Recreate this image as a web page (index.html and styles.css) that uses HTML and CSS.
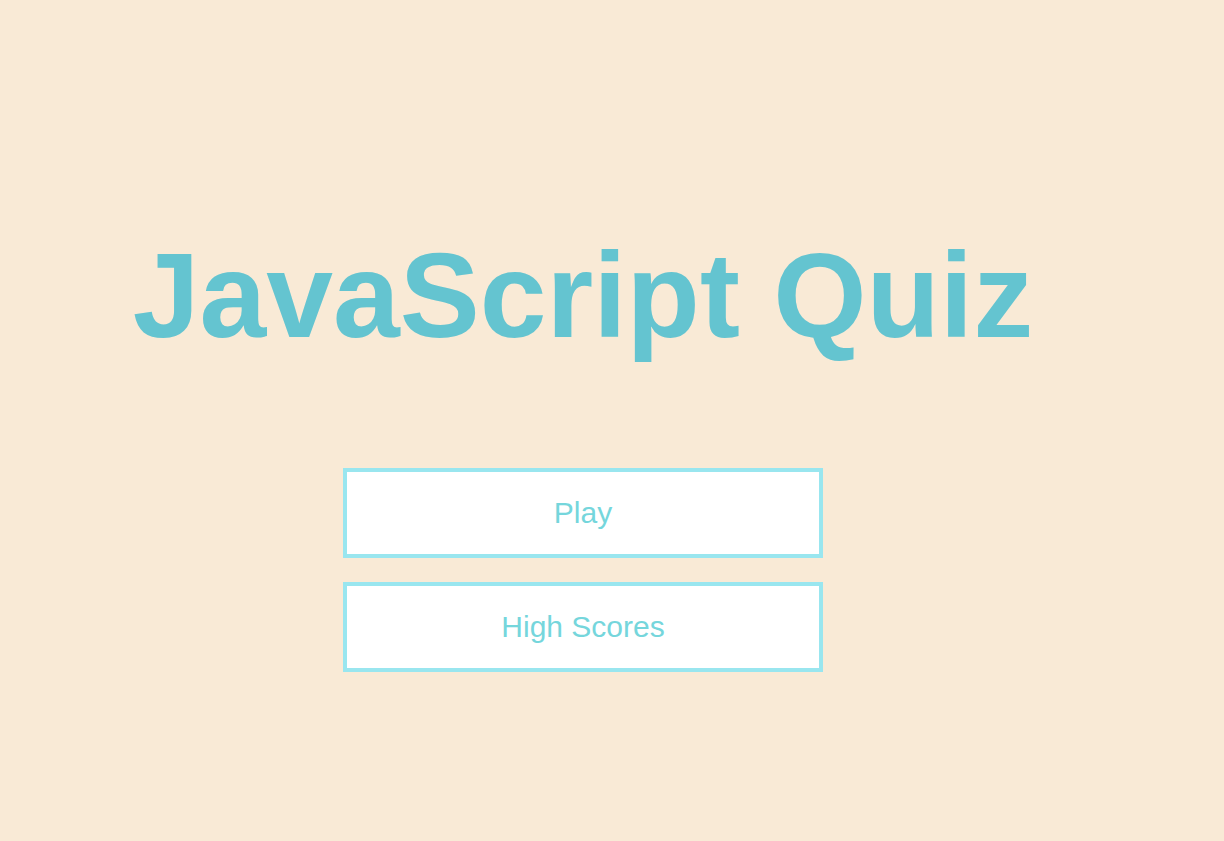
FILE: index.html
```html
<!DOCTYPE html>
<html lang="en">
<head>
<meta charset="utf-8">
<title>JavaScript Quiz</title>
<link rel="stylesheet" href="styles.css">
</head>
<body>
  <main class="home">
    <h1 class="title">JavaScript Quiz</h1>
    <div class="menu">
      <a class="btn" href="#">Play</a>
      <a class="btn" href="#">High Scores</a>
    </div>
  </main>
</body>
</html>
```
FILE: styles.css
```css
html, body {
  margin: 0;
  padding: 0;
  height: 100%;
}
body {
  background: #f9ead6;
  font-family: "Liberation Sans", Arial, sans-serif;
}
.home {
  width: 1166px;
  display: flex;
  flex-direction: column;
  align-items: center;
  padding-top: 235px;
}
.title {
  margin: 0;
  font-size: 120px;
  line-height: 120px;
  font-weight: 700;
  color: #64c4d0;
  white-space: nowrap;
}
.menu {
  margin-top: 113px;
  display: flex;
  flex-direction: column;
  gap: 24px;
}
.btn {
  box-sizing: border-box;
  width: 480px;
  height: 90px;
  display: flex;
  align-items: center;
  justify-content: center;
  background: #ffffff;
  border: 4px solid #99e6ef;
  color: #75d6dc;
  font-size: 30px;
  text-decoration: none;
}
```
